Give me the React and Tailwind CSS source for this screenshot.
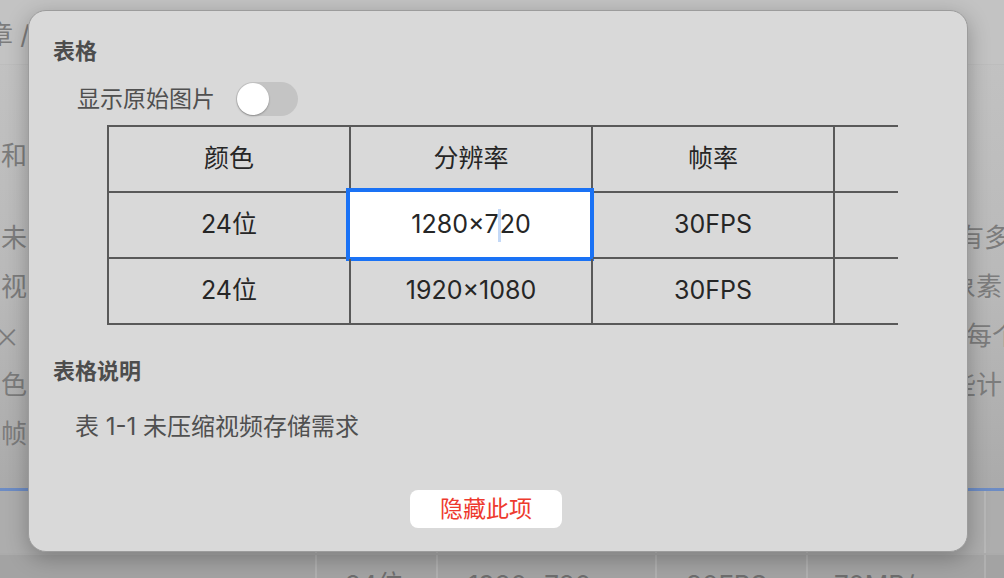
import React from "react";

const font = "font-[Inter,'Noto_Sans_CJK_SC',sans-serif]";

const paraRows = [
  { left: "未", right: "有多", shift: "pl-[8px]" },
  { left: "视", right: "象素", shift: "pl-[0px]" },
  { left: "×", right: "每个", shift: "pl-[16px]", cjk: true },
  { left: "色", right: "些计", shift: "pl-[0px]" },
  { left: "s帧", right: "", shift: "pl-[0px]" },
];

function BgRow({ left, right, shift, cjk, h = "h-[49px]" }) {
  return (
    <div className={`flex ${h} items-center whitespace-nowrap`}>
      <div className="flex w-[28px] justify-end overflow-hidden">
        <span className={cjk ? "pr-[8px] font-['Noto_Sans_CJK_SC',sans-serif]" : "pr-[1px]"}>{left}</span>
      </div>
      <div className="flex-1" />
      <div className={`w-[54px] overflow-hidden ${shift}`}>{right}</div>
    </div>
  );
}

function Toggle() {
  return (
    <div className="flex h-[34px] w-[62px] items-center rounded-full bg-[#c4c4c4] px-[1px]">
      <div className="h-[32px] w-[32px] rounded-full bg-white shadow-[0_1px_2px_rgba(0,0,0,0.3)]" />
    </div>
  );
}

const header = ["颜色", "分辨率", "帧率", ""];
const rows = [
  ["24位", "1280×720", "30FPS", ""],
  ["24位", "1920×1080", "30FPS", ""],
];

function Cell({ children, selected }) {
  return (
    <div className="relative flex h-[66px] w-[242px] shrink-0 items-center justify-center border-r-2 border-b-2 border-[#595959] text-[25px] text-[#262626]">
      {selected ? (
        <div className="absolute -top-[5px] -bottom-[4px] -left-[5px] -right-[3px] flex items-center justify-center border-4 border-[#1a72f5] bg-white">
          <span className="pl-[2px]">
            1280×7
            <span className="-mx-[1px] inline-block h-[33px] w-[3px] bg-[#c4d9f7] align-middle" />
            20
          </span>
        </div>
      ) : (
        children
      )}
    </div>
  );
}

export default function App() {
  return (
    <div className={`relative h-[578px] w-[1004px] overflow-hidden bg-gradient-to-b from-[#c4c4c4] via-[#b9b9b9] to-[#a4a4a4] ${font}`}>
      {/* page behind the sheet */}
      <div className="flex flex-col text-[26px] text-[#7c7c7c]">
        <div className="flex h-[65px] items-center border-b border-[#bdbdbd] bg-[#c3c3c3] pt-[4px] whitespace-nowrap">
          <span className="-ml-[13px]">章 /</span>
        </div>
        <div className="mt-[65px]">
          <BgRow left="s和" right="" shift="" h="h-[50px]" />
        </div>
        <div className="mt-[33px] flex flex-col">
          {paraRows.map((r) => (
            <BgRow key={r.left} {...r} />
          ))}
        </div>
        <div className="mt-[30px] h-[3px] bg-[#6d8cc4]" />
        <div className="flex h-[62px] bg-[#adadad]">
          <div className="w-[315px]" />
          <div className="w-[121px] border-l-2 border-[#b8b8b8]" />
          <div className="w-[219px] border-l-2 border-[#b8b8b8]" />
          <div className="w-[151px] border-l-2 border-[#b8b8b8]" />
          <div className="w-[178px] border-l-2 border-[#b8b8b8]" />
          <div className="flex-1 border-l-2 border-[#b8b8b8]" />
        </div>
        <div className="flex h-[60px] border-t-2 border-[#ababab] bg-[#a3a3a3] text-[#6e6e6e] whitespace-nowrap">
          <div className="w-[315px]" />
          <div className="flex w-[121px] items-center border-l-2 border-[#b0b0b0] pl-[28px]">24位</div>
          <div className="flex w-[219px] items-center border-l-2 border-[#b0b0b0] pl-[30px]">1920×720</div>
          <div className="flex w-[151px] items-center border-l-2 border-[#b0b0b0] pl-[29px]">30FPS</div>
          <div className="flex w-[178px] items-center border-l-2 border-[#b0b0b0] pl-[26px]">70MB/s</div>
          <div className="flex-1 border-l-2 border-[#b0b0b0]" />
        </div>
      </div>

      {/* sheet */}
      <div className="absolute left-[28px] top-[10px] flex h-[542px] w-[940px] flex-col rounded-[18px] border border-[#9c9c9c] bg-[#d9d9d9] pt-[24px] pl-[24px] shadow-[0_6px_22px_rgba(0,0,0,0.28)]">
        <div className="h-[32px] text-[22px] leading-[32px] font-bold text-[#4d4d4d]">表格</div>

        <div className="mt-[14px] ml-[24px] flex h-[36px] items-center gap-[21px]">
          <span className="text-[23px] text-[#505050]">显示原始图片</span>
          <Toggle />
        </div>

        <div className="mt-[8px] ml-[54px] w-[791px] overflow-hidden">
          <div className="flex w-max flex-col border-t-2 border-l-2 border-[#595959]">
            <div className="flex">
              {header.map((h, i) => (
                <Cell key={i}>{h}</Cell>
              ))}
            </div>
            {rows.map((r, ri) => (
              <div key={ri} className="flex">
                {r.map((c, ci) => (
                  <Cell key={ci} selected={ri === 0 && ci === 1}>
                    {c}
                  </Cell>
                ))}
              </div>
            ))}
          </div>
        </div>

        <div className="mt-[30px] h-[32px] text-[22px] leading-[32px] font-bold text-[#4d4d4d]">表格说明</div>
        <div className="mt-[24px] ml-[22px] h-[32px] text-[24px] leading-[32px] text-[#505050]">表 1-1 未压缩视频存储需求</div>

        <button className="mt-[47px] ml-[357px] flex h-[38px] w-[152px] items-center justify-center rounded-[8px] bg-white text-[23px] text-[#ee3a2e]">
          隐藏此项
        </button>
      </div>
    </div>
  );
}
